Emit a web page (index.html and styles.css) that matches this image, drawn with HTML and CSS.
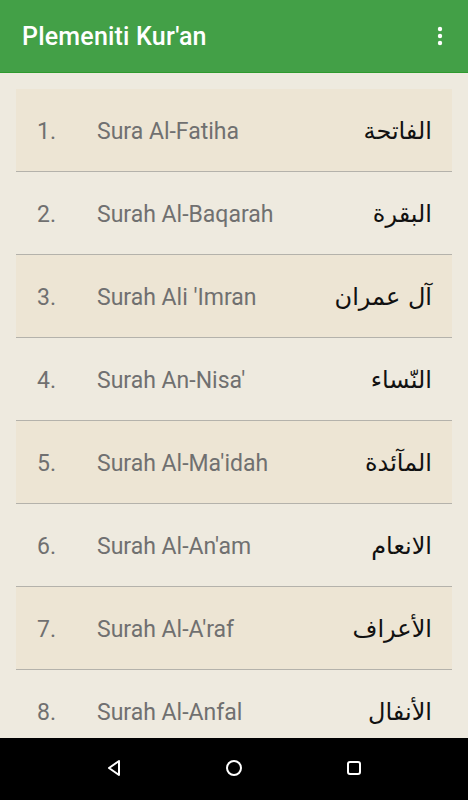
FILE: index.html
```html
<!DOCTYPE html>
<html lang="hr">
<head>
    <meta charset="UTF-8">
    <meta name="viewport" content="width=device-width, initial-scale=1.0">
    <title>Plemeniti Kur'an</title>
    <link rel="stylesheet" href="styles.css">
</head>
<body>
    <div class="app">
        <header class="toolbar">
            <h1>Plemeniti Kur'an</h1>
            <svg class="menu" width="24" height="24" viewBox="0 0 24 24">
                <circle cx="12" cy="5" r="2.2" fill="#fff"/>
                <circle cx="12" cy="12" r="2.2" fill="#fff"/>
                <circle cx="12" cy="19" r="2.2" fill="#fff"/>
            </svg>
        </header>

        <main class="content">
            <ul class="surah-list">
                <li class="row odd"><span class="num">1.</span><span class="name">Sura Al-Fatiha</span><span class="arabic" lang="ar">الفاتحة</span></li>
                <li class="row"><span class="num">2.</span><span class="name">Surah Al-Baqarah</span><span class="arabic" lang="ar">البقرة</span></li>
                <li class="row odd"><span class="num">3.</span><span class="name">Surah Ali 'Imran</span><span class="arabic" lang="ar">آل عمران</span></li>
                <li class="row"><span class="num">4.</span><span class="name">Surah An-Nisa'</span><span class="arabic" lang="ar">النّساء</span></li>
                <li class="row odd"><span class="num">5.</span><span class="name">Surah Al-Ma'idah</span><span class="arabic" lang="ar">المآئدة</span></li>
                <li class="row"><span class="num">6.</span><span class="name">Surah Al-An'am</span><span class="arabic" lang="ar">الانعام</span></li>
                <li class="row odd"><span class="num">7.</span><span class="name">Surah Al-A'raf</span><span class="arabic" lang="ar">الأعراف</span></li>
                <li class="row"><span class="num">8.</span><span class="name">Surah Al-Anfal</span><span class="arabic" lang="ar">الأنفال</span></li>
            </ul>
        </main>

        <nav class="navbar">
            <svg width="20" height="20" viewBox="0 0 20 20"><path d="M15 3 L5 10 L15 17 Z" fill="none" stroke="#fff" stroke-width="2" stroke-linejoin="round"/></svg>
            <svg width="20" height="20" viewBox="0 0 20 20"><circle cx="10" cy="10" r="7" fill="none" stroke="#fff" stroke-width="2"/></svg>
            <svg width="20" height="20" viewBox="0 0 20 20"><rect x="4" y="4" width="12" height="12" rx="2" fill="none" stroke="#fff" stroke-width="2"/></svg>
        </nav>
    </div>
</body>
</html>
```

FILE: styles.css
```css
* {
    box-sizing: border-box;
}
html, body {
    margin: 0;
    padding: 0;
}
body {
    font-family: Roboto, 'DejaVu Sans', sans-serif;
    background: #eeeadf;
}
.app {
    height: 100vh;
    display: flex;
    flex-direction: column;
}
.toolbar {
    height: 73px;
    flex-shrink: 0;
    background: #43a047;
    border-bottom: 1px solid #2e9a2e;
    display: flex;
    align-items: center;
    justify-content: space-between;
    padding: 0 16px 0 22px;
}
.toolbar h1 {
    margin: 0;
    color: #fff;
    font-size: 25px;
    font-weight: 500;
    letter-spacing: 0.2px;
}
.content {
    flex: 1;
    overflow: hidden;
    padding: 16px 16px 0;
}
.surah-list {
    list-style: none;
    margin: 0;
    padding: 0;
}
.row {
    height: 83px;
    display: flex;
    align-items: center;
    padding: 2px 20px 0 21px;
    border-bottom: 1px solid #b4b2ab;
}
.row.odd {
    background: #ede5d4;
}
.num {
    width: 60px;
    font-size: 23px;
    color: #707070;
}
.name {
    flex: 1;
    font-size: 23px;
    color: #707070;
}
.arabic {
    font-family: 'DejaVu Sans', sans-serif;
    font-size: 24px;
    color: #111;
    direction: rtl;
}
.navbar {
    height: 62px;
    flex-shrink: 0;
    background: #000;
    display: flex;
    align-items: center;
    justify-content: center;
    gap: 100px;
    padding-bottom: 2px;
}
```
